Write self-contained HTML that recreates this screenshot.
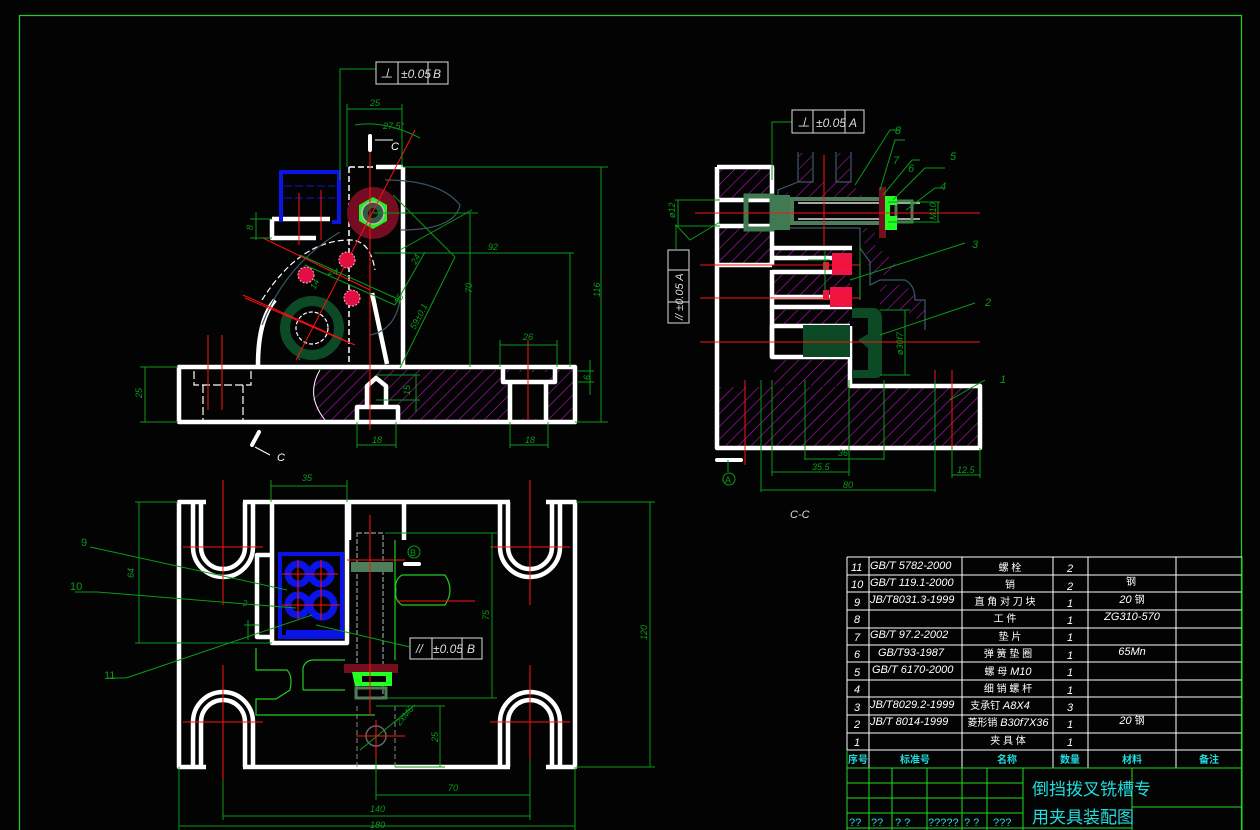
<!DOCTYPE html>
<html><head><meta charset="utf-8"><style>
html,body{margin:0;padding:0;background:#030303;}
svg{display:block;}
text{font-family:"Liberation Sans","Noto Sans CJK SC",sans-serif;}
</style></head><body>
<svg width="1260" height="830" viewBox="0 0 1260 830" xmlns="http://www.w3.org/2000/svg">
<defs>
<pattern id="h" patternUnits="userSpaceOnUse" width="9" height="9" patternTransform="rotate(45)">
<line x1="0" y1="0" x2="0" y2="9" stroke="#c010c0" stroke-width="1.2"/>
</pattern>
<pattern id="h2" patternUnits="userSpaceOnUse" width="9" height="9" patternTransform="rotate(45)">
<line x1="0" y1="0" x2="0" y2="9" stroke="#b010b0" stroke-width="1.2"/>
</pattern>
</defs>
<rect width="1260" height="830" fill="#030303"/>
<path d="M19.5,830 V15.5 H1241.5 V830" fill="none" stroke="#22cc22" stroke-width="1.2"/>

<!-- ================= FRONT VIEW ================= -->
<g>
<path d="M320,370 H574 V420 H320 Q305,395 320,370Z" fill="url(#h)"/>
<rect x="503" y="372" width="44" height="13" fill="#030303"/>
<rect x="510" y="385" width="36" height="34" fill="#030303"/>
<rect x="366" y="380" width="22" height="38" fill="#030303"/>
<rect x="355" y="405" width="42" height="15" fill="#030303"/>
<path d="M320,370 Q305,395 325,420" fill="none" stroke="#fff" stroke-width="1"/>
<g fill="none" stroke="#fff" stroke-width="4.5" stroke-linejoin="round">
<rect x="179" y="367" width="396" height="55"/>
<path d="M503,368 V382 H555 V368"/>
<path d="M510,382 V421 M546,382 V421"/>
<path d="M357,421 V407 H398 V421"/>
<path d="M367,407 V386 L376,378 L386,386 V407"/>
<path d="M403,167 V366"/>
<path d="M376,167 H403"/>
<path d="M272,219 H330 M272,219 V238 H316"/>
<path d="M258,365 Q258,320 275,300"/>
<path d="M372,293 L387,364"/>
</g>
<path d="M349,167 V366" stroke="#fff" stroke-width="1.5" stroke-dasharray="6,3" fill="none"/>
<path d="M349,167 H375" stroke="#fff" stroke-width="1.5" stroke-dasharray="6,3"/>
<path d="M194,371 V385 H251 V371 M203,385 V420 M243,385 V420" stroke="#fff" stroke-width="1.2" stroke-dasharray="8,3" fill="none"/>
<path d="M262,300 Q300,240 350,240 Q370,240 375,270" fill="none" stroke="#fff" stroke-width="1.2" stroke-dasharray="6,3"/>
<path d="M262,325 Q285,265 340,232 M385,180 Q440,180 460,205 Q455,230 400,230" fill="none" stroke="#3a5666" stroke-width="1.2"/>
<path d="M300,360 Q285,340 290,320 M400,300 Q395,330 370,335" fill="none" stroke="#3a5666" stroke-width="1.2"/>
<path d="M281,222 V172 H339 V222 H332" fill="none" stroke="#0a14e6" stroke-width="4"/>
<path d="M284,186 H335 M284,198 H335" stroke="#0a14e6" stroke-width="1" stroke-dasharray="8,3"/>
<circle cx="373" cy="213" r="26" fill="#760c22"/>
<polygon points="373,197 387,205 387,221 373,229 359,221 359,205" fill="#22ee22"/>
<circle cx="373" cy="213" r="11" fill="#2f5a3c" stroke="#bbb" stroke-width="1.5"/>
<circle cx="373" cy="213" r="5" fill="#111"/>
<g fill="#e01045" stroke="#ffb0c0" stroke-width="1" stroke-dasharray="2,1.5">
<circle cx="306" cy="275" r="8"/><circle cx="347" cy="260" r="8"/><circle cx="352" cy="298" r="8"/>
</g>
<circle cx="312" cy="328" r="27" fill="none" stroke="#0c4a26" stroke-width="10"/>
<circle cx="312" cy="328" r="16" fill="none" stroke="#fff" stroke-width="1.2" stroke-dasharray="4,2"/>
<g stroke="#ff1010" stroke-width="1">
<line x1="370" y1="148" x2="370" y2="430"/>
<line x1="415" y1="130" x2="296" y2="360"/>
<line x1="243" y1="295" x2="355" y2="345"/>
<line x1="245" y1="298" x2="350" y2="343"/>
<line x1="263" y1="238" x2="370" y2="290"/>
<line x1="208" y1="335" x2="208" y2="410"/>
<line x1="222" y1="335" x2="222" y2="410"/>
<line x1="528" y1="340" x2="528" y2="420"/>
<line x1="299" y1="193" x2="299" y2="245"/>
<line x1="321" y1="190" x2="321" y2="240"/>
</g>
<path d="M370,136 V150" stroke="#fff" stroke-width="4" stroke-linecap="round"/>
<path d="M375,140 H393" stroke="#fff" stroke-width="1"/>
<text x="391" y="150" fill="#fff" font-size="11" font-style="italic">C</text>
<path d="M252,445 L259,432" stroke="#fff" stroke-width="4" stroke-linecap="round"/>
<path d="M255,447 L270,455" stroke="#fff" stroke-width="1"/>
<text x="277" y="461" fill="#fff" font-size="11" font-style="italic">C</text>
<g stroke="#0a9a1a" stroke-width="1" fill="none">
<path d="M340,180 V69 H376"/>
<rect x="376" y="62" width="72" height="22" stroke="#ddd"/>
<path d="M398,62 V84 M428,62 V84" stroke="#ddd"/>
<path d="M347,104 V167 M402,104 V167 M347,109 H402"/>
<path d="M403,167 H608 M601,167 V422 M575,422 H608"/>
<path d="M373,213 H478 M470,213 V367"/>
<path d="M374,253 H574 M570,253 V367"/>
<path d="M140,367 H178 M145,367 V422 M140,422 H178"/>
<path d="M256,212 V240 M250,219 H272 M250,238 H272"/>
<path d="M500,340 V367 M557,340 V367 M500,345 H557"/>
<path d="M590,360 V395 M578,371 H594 M578,382 H594"/>
<path d="M357,422 V448 M396,422 V448 M357,445 H396"/>
<path d="M510,422 V448 M548,422 V448 M510,445 H548"/>
<path d="M376,375 H420 M416,375 V412 M376,400 H420"/>
<path d="M393,195 L455,257 M300,255 L400,300 M400,250 L472,210 M305,265 L395,305"/>
<path d="M425,252 L395,305 M455,257 L400,368"/>
<path d="M355,125 Q385,120 420,138"/>
</g>
<g fill="#0a9a1a" font-size="9" font-style="italic">
<text x="401" y="78" fill="#ddd" font-size="12">±0.05</text>
<text x="433" y="78" fill="#ddd" font-size="12">B</text>
<text x="380" y="78" fill="#ddd" font-size="13">⊥</text>
<text x="370" y="106">25</text>
<text x="383" y="129">27.5°</text>
<text x="488" y="250">92</text>
<text x="472" y="293" transform="rotate(-90 472 293)">70</text>
<text x="600" y="297" transform="rotate(-90 600 297)">116</text>
<text x="142" y="398" transform="rotate(-90 142 398)">25</text>
<text x="253" y="230" transform="rotate(-90 253 230)">8</text>
<text x="523" y="340">26</text>
<text x="590" y="380" transform="rotate(-90 590 380)">6</text>
<text x="372" y="443">18</text>
<text x="525" y="443">18</text>
<text x="415" y="330" transform="rotate(-62 415 330)">59±0.1</text>
<text x="416" y="265" transform="rotate(-62 416 265)">24</text>
<text x="399" y="305" transform="rotate(-62 399 305)">15</text>
<text x="328" y="275">24</text>
<text x="315" y="290" transform="rotate(-62 315 290)">14</text>
<text x="410" y="395" transform="rotate(-90 410 395)">15</text>
</g>
</g>

<!-- ================= C-C VIEW ================= -->
<g>
<rect x="719" y="169" width="51" height="29" fill="url(#h)"/>
<rect x="719" y="228" width="51" height="35" fill="url(#h)"/>
<rect x="719" y="387" width="260" height="60" fill="url(#h)"/>
<rect x="774" y="360" width="74" height="26" fill="url(#h)"/>
<rect x="774" y="250" width="76" height="8" fill="url(#h)"/>
<rect x="774" y="275" width="76" height="20" fill="url(#h)"/>
<rect x="774" y="310" width="76" height="16" fill="url(#h)"/>
<path d="M798,152 V182 H813 V152 M836,152 V182 H851 V152 M798,182 L778,190 V198 H862 M778,228 H860 V248 L870,262 V285 L880,280 L905,280 Q915,285 915,300 L925,300 V330 M860,262 L860,300" fill="none" stroke="#3c5a6a" stroke-width="1.2"/>
<path d="M799,153 H812 V182 H837 V153 H850 V185 L862,192 V198 H780 L799,185Z" fill="url(#h2)"/>
<path d="M862,228 H875 V245 L895,262 V275 H870 Z" fill="url(#h2)"/>
<path d="M880,285 L905,285 L925,305 V325 L905,310 H880Z" fill="url(#h2)"/>
<g fill="none" stroke="#fff" stroke-width="4.5" stroke-linejoin="round">
<path d="M717,167 H772 V198 M717,167 V448 H980 V386 H850 V357 H772 V325"/>
<path d="M717,200 H772 M717,226 H772 V265 M717,265 H772"/>
<path d="M772,248 H852 M772,258 H852 M772,272 H852 M772,297 H852 M772,307 H852 M772,326 H850"/>
<path d="M772,270 V357"/>
<path d="M850,326 V357"/>
</g>
<!-- pin: outlined -->
<path d="M773,195 H790 V230 H773 Z" fill="#3f7a52"/>
<rect x="746" y="196" width="26" height="33" fill="none" stroke="#3f7a52" stroke-width="5"/>
<rect x="792" y="199" width="90" height="24" fill="none" stroke="#4f7d5a" stroke-width="4"/>
<line x1="798" y1="203" x2="920" y2="203" stroke="#ddd" stroke-width="1.5"/>
<line x1="798" y1="219" x2="920" y2="219" stroke="#ddd" stroke-width="1.5"/>
<rect x="896" y="201" width="16" height="21" fill="none" stroke="#4f7d5a" stroke-width="3"/>
<rect x="879" y="187" width="7" height="51" fill="#74101e"/>
<path d="M885,196 H897 V205 H890 V216 H897 V230 H885Z" fill="#22ff22"/>
<rect x="832" y="253" width="20" height="22" fill="#ee1545"/>
<rect x="830" y="287" width="22" height="20" fill="#ee1545"/>
<rect x="823" y="290" width="6" height="10" fill="#ee1545"/>
<rect x="823" y="262" width="6" height="8" fill="#ee1545"/>
<rect x="803" y="325" width="47" height="32" fill="#0c4a26"/>
<path d="M852,308 H875 Q882,310 882,318 V372 Q882,378 875,378 H852 V370 H868 V348 L858,340 L868,334 V318 H852Z" fill="#0c4a26"/>
<g stroke="#ff1010" stroke-width="1">
<line x1="695" y1="213" x2="980" y2="213"/>
<line x1="700" y1="265" x2="860" y2="265"/>
<line x1="700" y1="298" x2="860" y2="298"/>
<line x1="700" y1="342" x2="980" y2="342"/>
<line x1="824" y1="155" x2="824" y2="245"/>
<line x1="745" y1="380" x2="745" y2="465"/>
<line x1="935" y1="370" x2="935" y2="465"/>
<line x1="952" y1="370" x2="952" y2="465"/>
</g>
<path d="M717,460 H741" stroke="#fff" stroke-width="4" stroke-linecap="round"/>
<line x1="728" y1="460" x2="728" y2="472" stroke="#0a9a1a"/>
<circle cx="729" cy="479" r="6" fill="none" stroke="#0a9a1a"/>
<text x="725" y="483" font-size="9" fill="#0a9a1a">A</text>
<g stroke="#0a9a1a" stroke-width="1" fill="none">
<path d="M772,180 V122 H792"/>
<rect x="792" y="110" width="72" height="23" stroke="#ddd"/>
<path d="M813,110 V133 M845,110 V133" stroke="#ddd"/>
<rect x="668" y="250" width="21" height="73" stroke="#ddd"/>
<path d="M668,270 H689 M668,302 H689" stroke="#ddd"/>
<path d="M676,250 V225 L690,240 L720,222"/>
<path d="M675,200 H720 M675,226 H720 M678,200 V226"/>
<path d="M888,202 H940 M888,222 H940 M938,202 V222"/>
<path d="M880,190 L895,140 H905"/>
<path d="M883,195 L912,160 H920"/>
<path d="M893,200 L925,168 H945"/>
<path d="M906,210 L935,188 H945"/>
<path d="M855,185 L890,130 H900"/>
<path d="M850,280 L965,243"/>
<path d="M880,335 L975,303"/>
<path d="M950,400 L985,380"/>
<path d="M905,310 V375 M880,310 H910 M880,375 H910"/>
<path d="M772,380 V476 M849,380 V476 M772,472 H849"/>
<path d="M805,380 V460 M884,380 V460 M805,459 H884"/>
<path d="M761,380 V492 M935,380 V492 M761,490 H935"/>
<path d="M952,448 V478 M980,448 V478 M952,475 H980"/>
<path d="M825,250 V290 M808,260 H830"/>
<path d="M860,245 V300"/>
</g>
<g fill="#0a9a1a" font-size="9" font-style="italic">
<text x="816" y="127" fill="#ddd" font-size="12">±0.05</text>
<text x="849" y="127" fill="#ddd" font-size="12">A</text>
<text x="797" y="127" fill="#ddd" font-size="13">⊥</text>
<text x="683" y="320" fill="#ddd" font-size="11" transform="rotate(-90 683 320)">//  ±0.05  A</text>
<text x="895" y="134" font-size="11">8</text>
<text x="893" y="164" font-size="11">7</text>
<text x="908" y="172" font-size="11">6</text>
<text x="950" y="160" font-size="11">5</text>
<text x="940" y="190" font-size="11">4</text>
<text x="972" y="248" font-size="11">3</text>
<text x="985" y="306" font-size="11">2</text>
<text x="1000" y="383" font-size="11">1</text>
<text x="675" y="218" transform="rotate(-90 675 218)">ø12</text>
<text x="936" y="220" transform="rotate(-90 936 220)">M10</text>
<text x="903" y="355" transform="rotate(-90 903 355)">ø30f7</text>
<text x="812" y="470">35.5</text>
<text x="838" y="456">36</text>
<text x="843" y="488">80</text>
<text x="957" y="473">12.5</text>
<text x="790" y="518" fill="#ddd" font-size="11">C-C</text>
</g>
</g>

<!-- ================= BOTTOM VIEW ================= -->
<g>
<g fill="none" stroke="#fff" stroke-width="4.5" stroke-linejoin="round">
<path d="M206,502 H179 V767 H206"/>
<path d="M243,502 H510"/>
<path d="M546,502 H575 V767 H546"/>
<path d="M243,767 H510"/>
<path d="M193,502 V547 A30,30 0 0 0 253,547 V502"/>
<path d="M201,502 V547 A22,22 0 0 0 245,547 V502"/>
<path d="M500,502 V547 A30,30 0 0 0 560,547 V502"/>
<path d="M508,502 V547 A22,22 0 0 0 552,547 V502"/>
<path d="M193,767 V722 A30,30 0 0 1 253,722 V767"/>
<path d="M201,767 V722 A22,22 0 0 1 245,722 V767"/>
<path d="M500,767 V722 A30,30 0 0 1 560,722 V767"/>
<path d="M508,767 V722 A22,22 0 0 1 552,722 V767"/>
<path d="M272,502 V643 H347 V502"/>
<path d="M349,502 V540 M404,502 V540"/>
<path d="M270,555 H257 V637 H270"/>
</g>
<rect x="280" y="554" width="62" height="83" fill="none" stroke="#0a14e6" stroke-width="4"/>
<rect x="286" y="630" width="55" height="6" fill="#0a14e6"/>
<g fill="none" stroke="#0a14e6" stroke-width="7">
<circle cx="298" cy="574" r="10"/><circle cx="321" cy="574" r="10"/>
<circle cx="298" cy="605" r="10"/><circle cx="322" cy="605" r="12"/>
</g>
<rect x="357" y="533" width="26" height="165" fill="none" stroke="#999" stroke-width="1.2" stroke-dasharray="5,2"/>
<rect x="351" y="562" width="42" height="10" fill="#4f7d5a"/>
<rect x="344" y="664" width="54" height="9" fill="#74101e"/>
<path d="M352,672 H392 V686 H355 Z" fill="#22ff22"/>
<rect x="362" y="676" width="24" height="6" fill="#030303"/>
<rect x="356" y="688" width="30" height="10" fill="none" stroke="#4f7d5a" stroke-width="3"/>
<g fill="none" stroke="#22cc22" stroke-width="1.2">
<path d="M256,648 V670 H287 Q293,676 290,690 L276,699 H256 V715 H375"/>
<path d="M303,690 V668 Q305,661 312,660 H345 M303,690 H345"/>
<path d="M396,590 Q394,580 402,575 H445 Q455,590 445,605 H402 Q394,600 396,590"/>
<path d="M395,540 V660"/>
</g>
<circle cx="376" cy="736" r="10" fill="none" stroke="#666" stroke-width="1.5"/>
<path d="M357,706 V767 M395,706 V767" stroke="#888" stroke-width="1" stroke-dasharray="5,3"/>
<g stroke="#ff1010" stroke-width="1">
<path d="M223,480 V605 M183,547 H263 M530,480 V605 M490,547 H570"/>
<path d="M223,665 V780 M183,722 H263 M530,665 V780 M490,722 H570"/>
<path d="M370,515 V715 M347,560 H405 M282,574 H338 M282,605 H340 M298,560 V620 M321,560 V620"/>
<path d="M398,601 H475 M356,736 H405 M376,720 V760"/>
</g>
<rect x="410" y="638" width="72" height="21" fill="none" stroke="#ddd"/>
<path d="M432,638 V659 M462,638 V659" stroke="#ddd"/>
<text x="416" y="653" fill="#ddd" font-size="12" font-style="italic">//</text>
<text x="433" y="653" fill="#ddd" font-size="12" font-style="italic">±0.05</text>
<text x="467" y="653" fill="#ddd" font-size="12" font-style="italic">B</text>
<circle cx="414" cy="552" r="6" fill="none" stroke="#0a9a1a"/>
<text x="410" y="556" font-size="9" fill="#0a9a1a">B</text>
<path d="M405,564 H419" stroke="#fff" stroke-width="4" stroke-linecap="round"/>
<g stroke="#0a9a1a" stroke-width="1" fill="none">
<path d="M271,480 V502 M347,480 V502 M271,486 H347"/>
<path d="M135,502 H178 M139,502 V643 M135,643 H272"/>
<path d="M385,533 H497 M492,533 V698 M385,698 H497"/>
<path d="M576,502 H655 M650,502 V767 M576,767 H655"/>
<path d="M376,706 H445 M440,706 V767 M395,767 H445"/>
<path d="M376,760 V800 M530,760 V800 M376,795 H530"/>
<path d="M223,780 V820 M530,780 V820 M223,816 H530"/>
<path d="M179,767 V830 M575,767 V830 M179,826 H575"/>
<path d="M360,750 L415,705"/>
<path d="M90,547 L287,590"/>
<path d="M75,592 L97,592 L296,608"/>
<path d="M108,678 L126,678 L312,615"/>
<path d="M316,625 L410,647"/>
<path d="M248,620 V640 M244,625 H260"/>
</g>
<g fill="#0a9a1a" font-size="9" font-style="italic">
<text x="302" y="481">35</text>
<text x="134" y="578" transform="rotate(-90 134 578)">64</text>
<text x="489" y="620" transform="rotate(-90 489 620)">75</text>
<text x="647" y="640" transform="rotate(-90 647 640)">120</text>
<text x="438" y="742" transform="rotate(-90 438 742)">25</text>
<text x="400" y="726" transform="rotate(-50 400 726)">2xM6</text>
<text x="448" y="791">70</text>
<text x="370" y="812">140</text>
<text x="370" y="828">180</text>
<text x="81" y="546" font-size="11" font-style="normal">9</text>
<text x="70" y="590" font-size="11" font-style="normal">10</text>
<text x="104" y="679" font-size="11" font-style="normal">11</text>
<text x="243" y="606" font-size="8">2</text>
</g>
</g>

<!-- ================= TITLE BLOCK ================= -->
<g>
<g stroke="#fff" stroke-width="1" fill="none">
<path d="M847,557 H1242"/>
<path d="M847,575 H1242 M847,592 H1242 M847,610 H1242 M847,628 H1242 M847,645 H1242 M847,662 H1242 M847,680 H1242 M847,697 H1242 M847,715 H1242 M847,733 H1242 M847,750 H1242"/>
<path d="M869,557 V768 M962,557 V768 M1053,557 V768 M1088,557 V768 M1176,557 V768"/>
<path d="M847,557 V768"/>
</g>
<g stroke="#22dd22" stroke-width="1" fill="none">
<path d="M847,768 H1242 M847,783 H1023 M847,798 H1023 M847,813 H1023 M847,828 H1132 M1132,807 H1242"/>
<path d="M847,750 V830 M869,768 V830 M892,768 V830 M927,768 V830 M962,768 V830 M987,768 V830 M1023,768 V830 M1132,768 V830 M1242,557 V830"/>
</g>
<g fill="#fff" font-size="11" font-style="italic">
<text x="851" y="571">11</text><text x="870" y="569">GB/T 5782-2000</text>
<text x="851" y="588">10</text><text x="870" y="586">GB/T 119.1-2000</text>
<text x="854" y="606">9</text><text x="870" y="603">JB/T8031.3-1999</text>
<text x="854" y="623">8</text>
<text x="854" y="641">7</text><text x="870" y="638">GB/T 97.2-2002</text>
<text x="854" y="658">6</text><text x="878" y="656">GB/T93-1987</text>
<text x="854" y="676">5</text><text x="872" y="673">GB/T 6170-2000</text>
<text x="854" y="693">4</text>
<text x="854" y="711">3</text><text x="870" y="708">JB/T8029.2-1999</text>
<text x="854" y="728">2</text><text x="870" y="725">JB/T 8014-1999</text>
<text x="854" y="746">1</text>
</g>
<g fill="#fff" font-size="10" text-anchor="middle">
<text x="1010" y="571">螺 栓</text>
<text x="1010" y="588">销</text>
<text x="1005" y="605">直 角 对 刀 块</text>
<text x="1005" y="622">工  件</text>
<text x="1010" y="640">垫  片</text>
<text x="1008" y="657">弹 簧 垫 圈</text>
<text x="1008" y="675">螺 母 <tspan font-style="italic" font-size="11">M10</tspan></text>
<text x="1008" y="692">细 销 螺 杆</text>
<text x="1000" y="709">支承钉 <tspan font-style="italic" font-size="11">A8X4</tspan></text>
<text x="1008" y="726">菱形销 <tspan font-style="italic" font-size="11">B30f7X36</tspan></text>
<text x="1008" y="744">夹 具 体</text>
</g>
<g fill="#fff" font-size="11" font-style="italic" text-anchor="middle">
<text x="1070" y="572">2</text><text x="1070" y="590">2</text><text x="1070" y="607">1</text><text x="1070" y="624">1</text>
<text x="1070" y="641">1</text><text x="1070" y="659">1</text><text x="1070" y="676">1</text><text x="1070" y="694">1</text>
<text x="1070" y="711">3</text><text x="1070" y="728">1</text><text x="1070" y="746">1</text>
<text x="1131" y="585" font-style="normal" font-size="10">钢</text>
<text x="1132" y="603">20 <tspan font-style="normal" font-size="10">钢</tspan></text>
<text x="1132" y="620">ZG310-570</text>
<text x="1132" y="655">65Mn</text>
<text x="1132" y="724">20 <tspan font-style="normal" font-size="10">钢</tspan></text>
</g>
<g fill="#22dddd" font-size="10" text-anchor="middle" font-weight="bold">
<text x="858" y="763">序号</text><text x="915" y="763">标准号</text><text x="1007" y="763">名称</text>
<text x="1070" y="763">数量</text><text x="1132" y="763">材料</text><text x="1209" y="763">备注</text>
</g>
<g fill="#22dddd" font-size="11">
<text x="849" y="826">??</text><text x="871" y="826">??</text><text x="895" y="826">? ?</text>
<text x="928" y="826">?????</text><text x="964" y="826">? ?</text><text x="993" y="826">???</text>
</g>
<text x="1032" y="795" fill="#22dddd" font-size="17" font-family="'Noto Sans CJK SC',sans-serif">倒挡拨叉铣槽专</text>
<text x="1032" y="823" fill="#22dddd" font-size="17" font-family="'Noto Sans CJK SC',sans-serif">用夹具装配图</text>
</g>
</svg>
</body></html>
